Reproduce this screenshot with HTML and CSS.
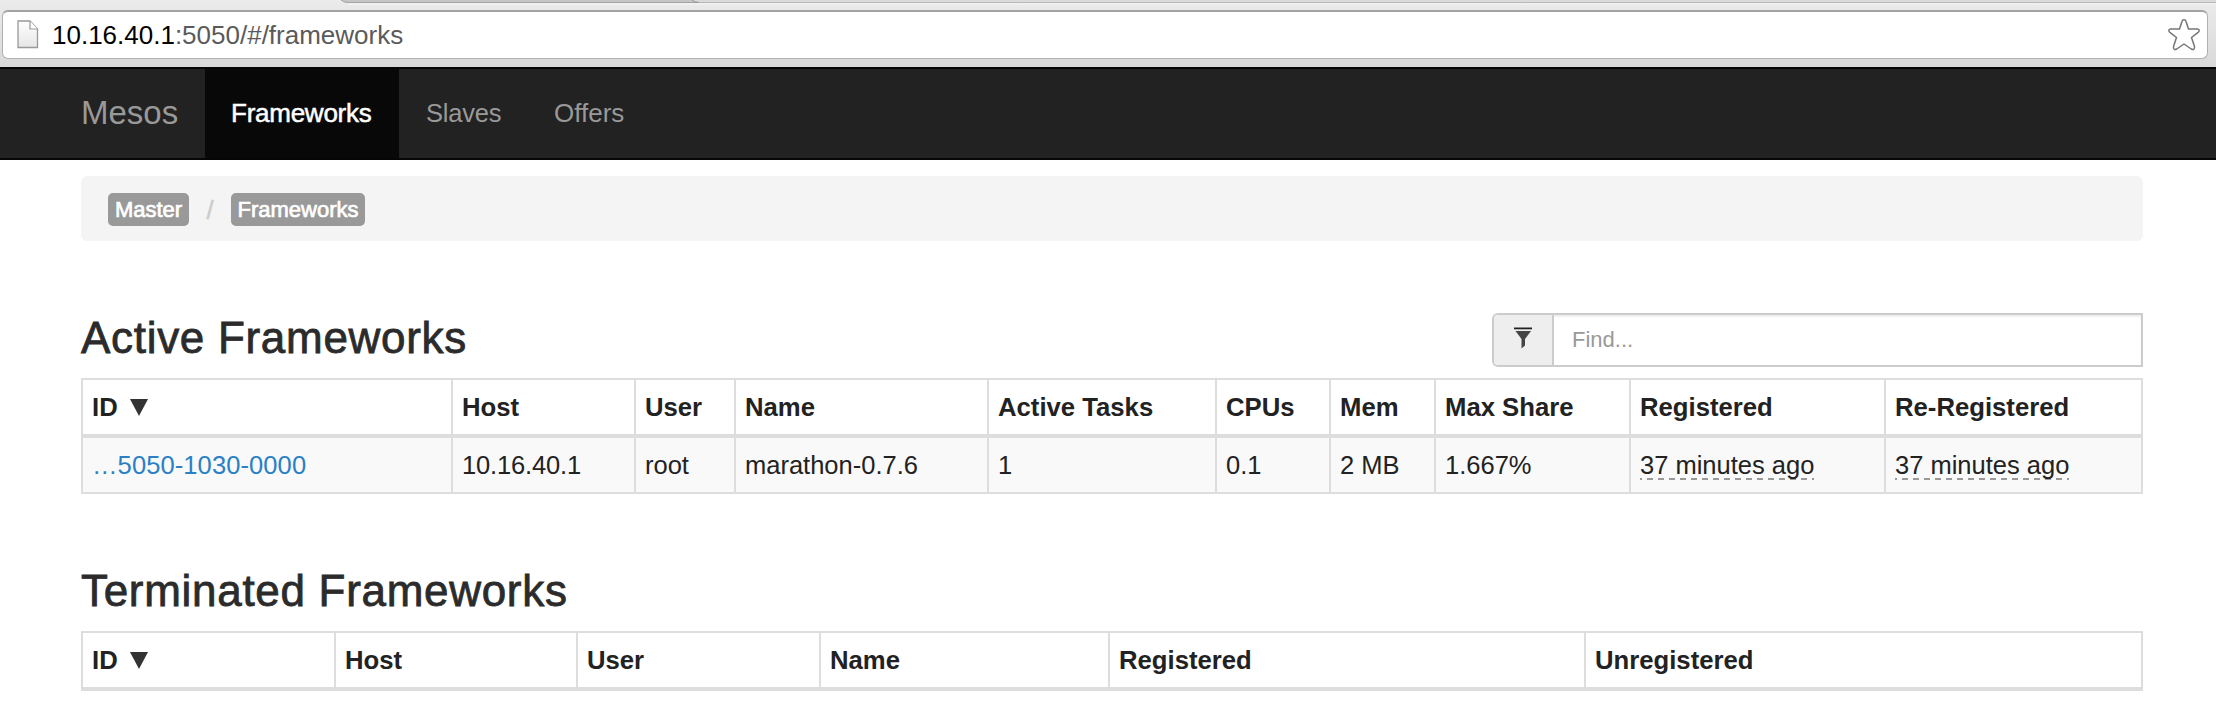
FILE: index.html
```html
<!DOCTYPE html>
<html lang="en">
<head>
<meta charset="utf-8">
<title>Mesos</title>
<link rel="stylesheet" href="styles.css">
</head>
<body>
<div class="chrome">
  <svg class="tabs" width="2216" height="5" viewBox="0 0 2216 5"><path d="M341 0H2216V3H350Q344 3 341 0Z" fill="#c5c5c5"/><path d="M692 0H2216V2H699Q696 2 692 0Z" fill="#dadada"/><path d="M341 0Q344 2.500 348 2.500H2216" fill="none" stroke="#a5a5a5"/><path d="M692 0Q695 2.500 699 2.500" fill="none" stroke="#999"/><path d="M699 2.500H2216" stroke="#b9b9b9"/><path d="M348 4H2216" stroke="#f5f5f5"/></svg>
  <div class="omnibox">
    <svg class="page-icon" width="22" height="30" viewBox="0 0 22 30"><defs><linearGradient id="pg" x2="0" y2="1"><stop offset="0" stop-color="#fff"/><stop offset="1" stop-color="#e6e6e6"/></linearGradient></defs><path d="M1 1H13L20.5 9V27.5H1Z" fill="url(#pg)" stroke="#999" stroke-width="1.3"/><path d="M13 1V9H20.5" fill="#fff" stroke="#999" stroke-width="1.2"/></svg>
    <span class="url"><span class="url-host">10.16.40.1</span>:5050/#/frameworks</span>
    <svg class="star" width="34" height="34" viewBox="0 0 34 34"><path d="M17 1.8Q18.5 1.8 19 3.5L21.5 11H30.5Q32.3 11.2 32.2 12.6Q32 14 30.5 14.8L24.5 19.5L27.4 28.3Q28 30.5 26.8 31.3Q25.8 31.8 24.3 31L17 26L9.700 31Q8.200 31.8 7.200 31.3Q6 30.5 6.600 28.3L9.500 19.5L3.500 14.800Q2 14 1.800 12.600Q1.700 11.200 3.500 11H12.500L15 3.500Q15.500 1.800 17 1.800Z" fill="#fff" stroke="#757575" stroke-width="1.500" stroke-linejoin="round"/></svg>
  </div>
</div>
<nav class="navbar">
  <a class="brand">Mesos</a>
  <a class="nav-item active">Frameworks</a>
  <a class="nav-item slaves">Slaves</a>
  <a class="nav-item">Offers</a>
</nav>
<main class="container">
  <div class="breadcrumb"><span class="badge">Master</span><span class="slash">/</span><span class="badge frameworks">Frameworks</span></div>
  <div class="heading-row">
    <h2>Active Frameworks</h2>
    <div class="search">
      <span class="addon"><svg width="20" height="22" viewBox="0 0 20 22"><path d="M1 0.500H19V2.300H1Z" fill="#222"/><path d="M2.500 4H18L12 12V18.500L8.500 21.500V12Z" fill="#444"/></svg></span>
      <span class="find">Find...</span>
    </div>
  </div>
  <table class="active-table">
    <colgroup><col class="a1"><col class="a2"><col class="a3"><col class="a4"><col class="a5"><col class="a6"><col class="a7"><col class="a8"><col class="a9"><col class="a10"></colgroup>
    <thead><tr><th>ID<svg class="sort" width="18" height="17" viewBox="0 0 18 17"><path d="M0 0H18L9 17Z" fill="#333"/></svg></th><th>Host</th><th>User</th><th>Name</th><th>Active Tasks</th><th>CPUs</th><th>Mem</th><th>Max Share</th><th>Registered</th><th>Re-Registered</th></tr></thead>
    <tbody><tr><td><a class="link">…5050-1030-0000</a></td><td class="host">10.16.40.1</td><td>root</td><td>marathon-0.7.6</td><td>1</td><td>0.1</td><td>2 MB</td><td>1.667%</td><td><span class="ago">37 minutes ago</span></td><td><span class="ago">37 minutes ago</span></td></tr></tbody>
  </table>
  <h2 class="terminated">Terminated Frameworks</h2>
  <table>
    <colgroup><col class="t1"><col class="t2"><col class="t3"><col class="t4"><col class="t5"><col class="t6"></colgroup>
    <thead><tr><th>ID<svg class="sort" width="18" height="17" viewBox="0 0 18 17"><path d="M0 0H18L9 17Z" fill="#333"/></svg></th><th>Host</th><th>User</th><th>Name</th><th>Registered</th><th>Unregistered</th></tr></thead>
  </table>
</main>
</body>
</html>
```
FILE: styles.css
```css
* { box-sizing: border-box; }
body { margin: 0; background: #fff; color: #222; font: 25.5px/36px "Liberation Sans", Arial, sans-serif; width: 2216px; height: 710px; overflow: hidden; }
.chrome { height: 67px; background: linear-gradient(#ebebeb, #d9d9d9); }
.tabs { display: block; height: 5px; }
.omnibox { display: flex; align-items: center; height: 49px; margin: 5px 8px 0 2px; padding: 0 6px 0 14px; background: #fff; border: 1.5px solid #b0b0b0; border-top: 2px solid #a2a2a2; border-radius: 6px; }
.page-icon { flex: none; }
.url { margin-left: 13px; font-size: 26px; color: #5a5a5a; flex: 1; }
.url-host { color: #000; }
.star { flex: none; margin-top: -1px; }
.navbar { display: flex; height: 93px; padding-left: 81px; background: #222; border-top: 2px solid #060606; border-bottom: 2px solid #060606; color: #999; }
.brand { width: 124px; font-size: 33px; line-height: 87px; }
.nav-item { font-size: 26px; line-height: 89px; padding: 0 27px; }
.active { width: 194px; padding: 0 26px; background: #080808; color: #fff; letter-spacing: -0.25px; -webkit-text-stroke: 0.5px #fff; }
.slaves { width: 128px; padding-right: 0; font-size: 25.5px; letter-spacing: -0.2px; }
.container { width: 2062px; margin: 16px 0 0 81px; }
.breadcrumb { display: flex; align-items: center; height: 65px; padding: 2px 0 0 27px; background: #f4f4f4; border-radius: 6px; }
.badge { width: 81px; height: 33px; line-height: 33px; border-radius: 5px; background: #999; color: #fff; text-align: center; font-size: 22px; -webkit-text-stroke: 0.7px #fff; }
.badge.frameworks { width: 134px; }
.slash { width: 42px; text-align: center; color: #ccc; -webkit-text-stroke: 0.5px #ccc; }
.heading-row { display: flex; justify-content: space-between; height: 137px; padding-top: 72px; }
h2 { margin: 0; font-size: 44px; line-height: 50px; font-weight: 400; letter-spacing: 0.7px; color: #2b2b2b; -webkit-text-stroke: 0.8px #2b2b2b; }
.terminated { margin-top: 72px; height: 65px; }
.search { display: flex; width: 651px; height: 54px; border: 2px solid #ccc; border-radius: 6px 0 0 6px; box-shadow: inset 0 2px 2px rgba(0, 0, 0, 0.07); }
.addon { display: flex; justify-content: center; width: 60px; padding-top: 12px; background: #eee; border-right: 2px solid #ccc; border-radius: 4px 0 0 4px; }
.find { padding-left: 18px; line-height: 50px; font-size: 22px; color: #999; }
table { width: 2062px; table-layout: fixed; border-collapse: separate; border-spacing: 0; border-right: 2px solid #ddd; border-top: 2px solid #ddd; }
th, td { padding: 0 0 0 9px; text-align: left; border-left: 2px solid #ddd; white-space: nowrap; }
th { height: 58px; font-size: 25.7px; border-bottom: 4px solid #ddd; }
td { height: 56px; border-bottom: 2px solid #ddd; background: #f9f9f9; }
.link { color: #2a80c5; letter-spacing: 0.1px; }
.host { letter-spacing: -0.15px; }
.sort { margin-left: 12px; }
.ago { display: inline-block; height: 30px; line-height: 30px; background: repeating-linear-gradient(90deg, #999 0 2px, transparent 2px 7px, #999 7px 11px) 0 100% / 100% 2px no-repeat; background-image: repeating-linear-gradient(90deg, #999 0 2px, transparent 2px 7px, #999 7px 11px); }
.a1 { width: 370px; }
.a2 { width: 183px; }
.a3 { width: 100px; }
.a4 { width: 253px; }
.a5 { width: 228px; }
.a6 { width: 114px; }
.a7 { width: 105px; }
.a8 { width: 195px; }
.a9 { width: 255px; }
.t1 { width: 253px; }
.t2 { width: 242px; }
.t3 { width: 243px; }
.t4 { width: 289px; }
.t5 { width: 476px; }
```
